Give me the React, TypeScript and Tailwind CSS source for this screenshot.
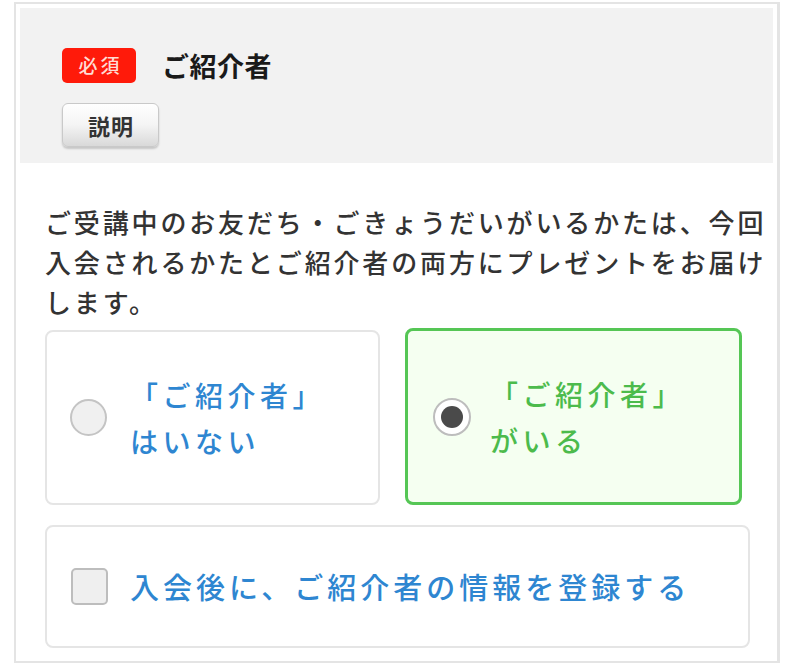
import React from "react";

const font = { fontFamily: '"Noto Sans CJK JP", "Noto Sans", sans-serif' };

export default function App() {
  return (
    <div className="w-[800px] h-[665px] bg-white pt-[2px] overflow-hidden" style={font}>
      <div className="ml-[14px] w-[766px] h-[661px] border-t-2 border-l-2 border-r-[3px] border-b-2 border-[#e4e4e4] px-[4px] pt-[4px]">
        {/* header */}
        <div className="h-[155px] bg-[#f2f2f2] pl-[42px] pt-[40px]">
          <div className="flex items-center">
            <span className="flex h-[35px] w-[74px] items-center justify-center rounded-[5px] bg-[#ff1a0a] text-[19px] font-medium tracking-[3px] pl-[3px] text-[#ffdcd4]">
              必須
            </span>
            <span className="ml-[26px] text-[27px] font-bold tracking-[0.5px] text-[#1a1a1a] leading-none">
              ご紹介者
            </span>
          </div>
          <button className="mt-[20px] flex h-[44px] w-[97px] items-center justify-center rounded-[6px] border border-[#c9c9c9] bg-gradient-to-b from-white via-[#f4f4f4] to-[#d9d9d9] text-[22px] font-bold tracking-[1px] pl-[1px] text-[#333] shadow-[0_2px_2px_rgba(0,0,0,0.18)]">
            説明
          </button>
        </div>

        {/* body */}
        <div className="pl-[25px] pr-[23px]">
          <p className="mt-[39px] text-[26px] font-medium leading-[40px] tracking-[2.85px] text-[#333] whitespace-nowrap">
            ご受講中のお友だち・ごきょうだいがいるかたは、今回
            <br />
            入会されるかたとご紹介者の両方にプレゼントをお届け
            <br />
            します。
          </p>

          <div className="mt-[8px] flex gap-[25px]">
            <div className="flex h-[175px] w-[335px] items-center rounded-[8px] border-2 border-[#e5e5e5] bg-white pl-[23px]">
              <span className="h-[37px] w-[37px] shrink-0 rounded-full border-2 border-[#c4c4c4] bg-[#f0f0f0]" />
              <span className="ml-[23px] text-[28px] font-medium leading-[46px] tracking-[4.5px] text-[#2e86d1]">
                「ご紹介者」
                <br />
                はいない
              </span>
            </div>
            <div className="flex h-[177px] w-[337px] -mt-[2px] items-center rounded-[8px] border-[3px] border-[#55c655] bg-[#f5fff1] pl-[25px]">
              <span className="flex h-[38px] w-[38px] shrink-0 items-center justify-center rounded-full border-2 border-[#bdbdbd] bg-white">
                <span className="h-[22px] w-[22px] rounded-full bg-[#4a4a4a]" />
              </span>
              <span className="ml-[19px] text-[28px] font-medium leading-[46px] tracking-[4.5px] text-[#4cbb4c]">
                「ご紹介者」
                <br />
                がいる
              </span>
            </div>
          </div>

          <div className="mt-[20px] flex h-[123px] w-[705px] items-center rounded-[8px] border-2 border-[#e5e5e5] bg-white pl-[24px]">
            <span className="h-[37px] w-[37px] shrink-0 rounded-[5px] border-2 border-[#bdbdbd] bg-[#efefef]" />
            <span className="ml-[22px] text-[29px] font-medium tracking-[4px] text-[#2e86d1] whitespace-nowrap">
              入会後に、ご紹介者の情報を登録する
            </span>
          </div>
        </div>
      </div>
    </div>
  );
}
